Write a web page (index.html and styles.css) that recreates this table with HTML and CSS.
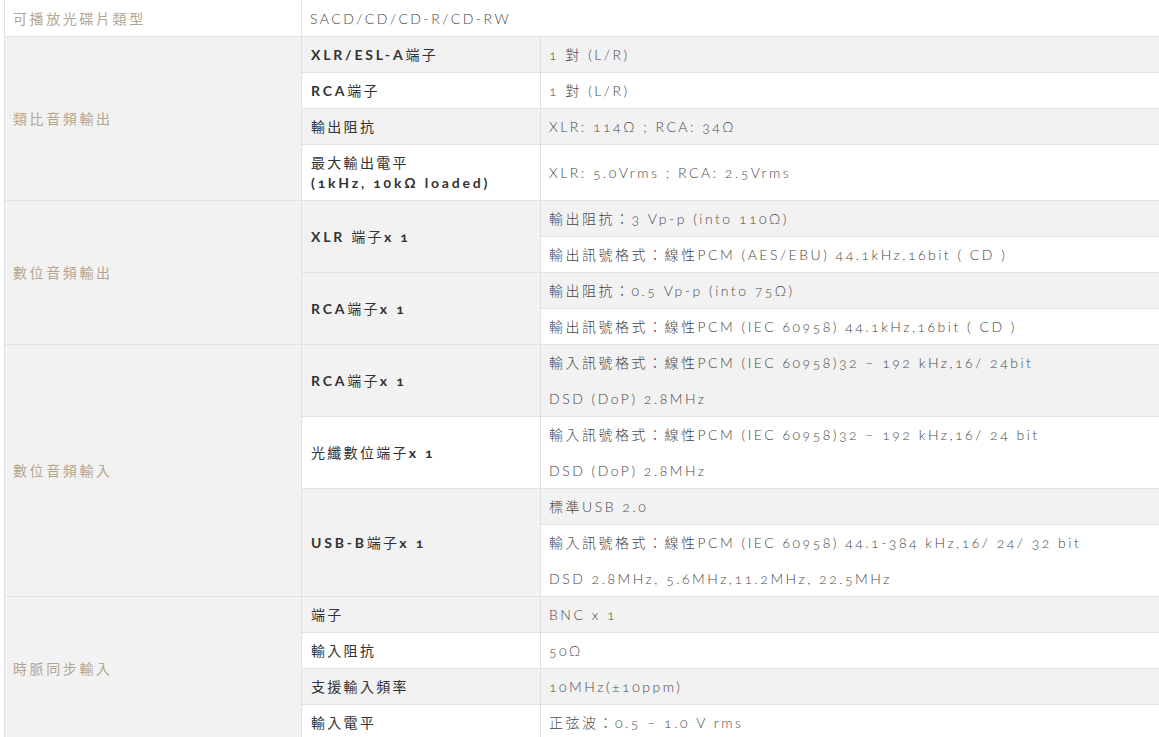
FILE: index.html
```html
<!DOCTYPE html>
<html lang="zh-Hant">
<head>
<meta charset="utf-8">
<title>規格</title>
<link rel="stylesheet" href="styles.css">
</head>
<body>
<div class="wrap">
<table class="spec">
  <colgroup>
    <col class="c1"><col class="c2"><col class="c3">
  </colgroup>
  <tbody>
    <tr>
      <th class="cat">可播放光碟片類型</th>
      <td class="val" colspan="2">SACD/CD/CD-R/CD-RW</td>
    </tr>
    <tr>
      <th class="cat" rowspan="4">類比音頻輸出</th>
      <td class="key">XLR/ESL-A<span class="zh">端子</span></td>
      <td class="val">1 對 (L/R)</td>
    </tr>
    <tr>
      <td class="key">RCA<span class="zh">端子</span></td>
      <td class="val">1 對 (L/R)</td>
    </tr>
    <tr>
      <td class="key"><span class="zh">輸出阻抗</span></td>
      <td class="val">XLR: 114Ω ; RCA: 34Ω</td>
    </tr>
    <tr>
      <td class="key"><span class="zh">最大輸出電平</span><br>(1kHz, 10kΩ loaded)</td>
      <td class="val">XLR: 5.0Vrms ; RCA: 2.5Vrms</td>
    </tr>
    <tr>
      <th class="cat" rowspan="4">數位音頻輸出</th>
      <td class="key" rowspan="2">XLR <span class="zh">端子</span>x 1</td>
      <td class="val">輸出阻抗：3 Vp-p (into 110Ω)</td>
    </tr>
    <tr>
      <td class="val">輸出訊號格式：線性PCM (AES/EBU) 44.1kHz,16bit ( CD )</td>
    </tr>
    <tr>
      <td class="key" rowspan="2">RCA<span class="zh">端子</span>x 1</td>
      <td class="val">輸出阻抗：0.5 Vp-p (into 75Ω)</td>
    </tr>
    <tr>
      <td class="val">輸出訊號格式：線性PCM (IEC 60958) 44.1kHz,16bit ( CD )</td>
    </tr>
    <tr>
      <th class="cat" rowspan="4">數位音頻輸入</th>
      <td class="key">RCA<span class="zh">端子</span>x 1</td>
      <td class="val"><p>輸入訊號格式：線性PCM (IEC 60958)32 – 192 kHz,16/ 24bit</p><p>DSD (DoP) 2.8MHz</p></td>
    </tr>
    <tr>
      <td class="key"><span class="zh">光纖數位端子</span>x 1</td>
      <td class="val"><p>輸入訊號格式：線性PCM (IEC 60958)32 – 192 kHz,16/ 24 bit</p><p>DSD (DoP) 2.8MHz</p></td>
    </tr>
    <tr>
      <td class="key" rowspan="2">USB-B<span class="zh">端子</span>x 1</td>
      <td class="val">標準USB 2.0</td>
    </tr>
    <tr>
      <td class="val"><p>輸入訊號格式：線性PCM (IEC 60958) 44.1-384 kHz,16/ 24/ 32 bit</p><p>DSD 2.8MHz, 5.6MHz,11.2MHz, 22.5MHz</p></td>
    </tr>
    <tr>
      <th class="cat" rowspan="4">時脈同步輸入</th>
      <td class="key"><span class="zh">端子</span></td>
      <td class="val">BNC x 1</td>
    </tr>
    <tr>
      <td class="key"><span class="zh">輸入阻抗</span></td>
      <td class="val">50Ω</td>
    </tr>
    <tr>
      <td class="key"><span class="zh">支援輸入頻率</span></td>
      <td class="val">10MHz(±10ppm)</td>
    </tr>
    <tr>
      <td class="key"><span class="zh">輸入電平</span></td>
      <td class="val">正弦波：0.5 – 1.0 V rms</td>
    </tr>
  </tbody>
</table>
</div>
</body>
</html>
```

FILE: styles.css
```css
html, body {
  margin: 0;
  padding: 0;
  background: #ffffff;
  overflow: hidden;
}

.wrap {
  padding-left: 4px;
}

.spec {
  width: 1160px;
  border-collapse: collapse;
  table-layout: fixed;
  font-family: "Lato", "Noto Sans CJK TC", sans-serif;
  font-size: 14px;
  font-variant-numeric: oldstyle-nums;
}

.spec col.c1 { width: 297px; }
.spec col.c2 { width: 239px; }

.spec tr:nth-child(even) th,
.spec tr:nth-child(even) td {
  background: #f2f2f2;
}

.spec th,
.spec td {
  padding: 8px 8px 7px;
  line-height: 20px;
  border: 1px solid #e2e2e2;
  border-right: 0;
  text-align: left;
  vertical-align: middle;
}

.spec tr:first-child th,
.spec tr:first-child td {
  border-top: 0;
  padding-top: 9px;
}

.spec .cat {
  font-weight: 400;
  color: #b3a68f;
  letter-spacing: 2.6px;
}

.spec .key {
  padding-left: 9px;
  font-weight: 700;
  color: #333333;
  letter-spacing: 2.8px;
}

.spec .key .zh {
  font-weight: 400;
  letter-spacing: 2.3px;
}

.spec .val {
  font-weight: 300;
  color: #484848;
  letter-spacing: 2.5px;
}

.spec .val p {
  margin: 0;
}

.spec .val p + p {
  margin-top: 16px;
}
```
